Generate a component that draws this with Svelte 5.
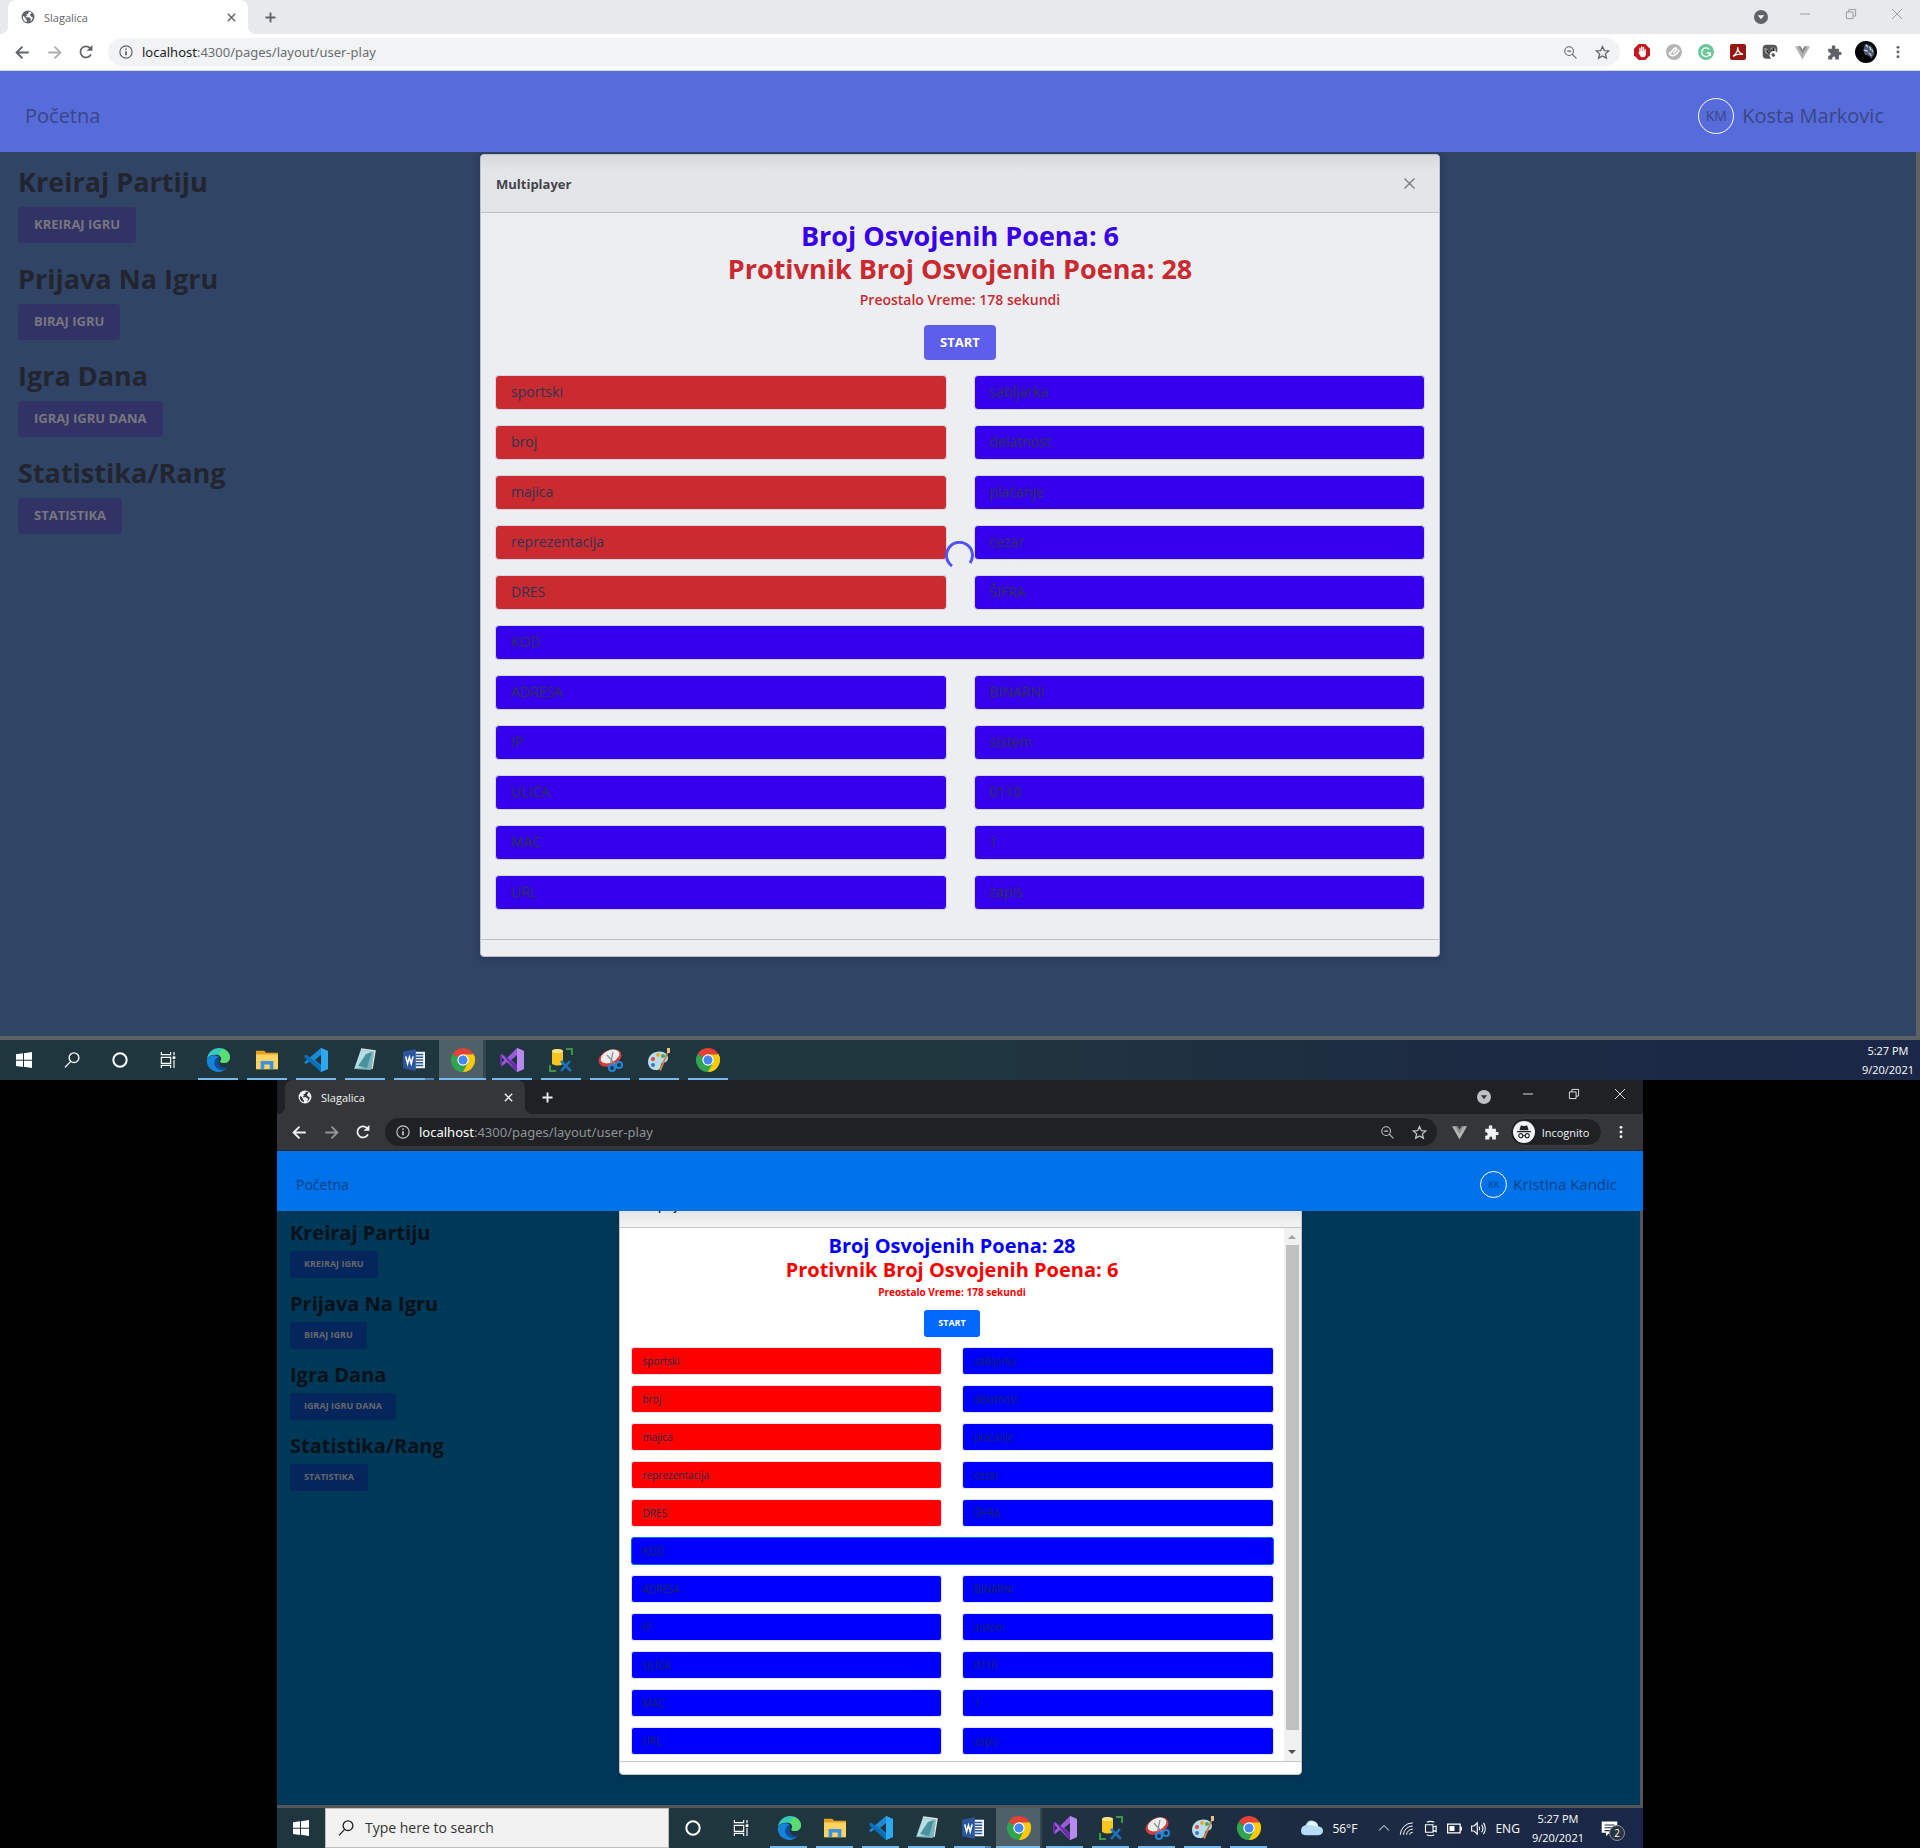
<script>
  const pairsTop = [
    ['sportski', 'sabljarka'],
    ['broj', 'delatnost'],
    ['majica', 'plaćanje'],
    ['reprezentacija', 'cezar'],
    ['DRES', 'ŠIFRA']
  ];
  const pairsBottom = [
    ['ADRESA', 'BINARNI'],
    ['IP', 'sistem'],
    ['ULICA', '0110'],
    ['MAC', '1'],
    ['URL', 'zapis']
  ];
  const sections = [
    ['Kreiraj Partiju', 'Kreiraj igru'],
    ['Prijava Na Igru', 'Biraj igru'],
    ['Igra Dana', 'Igraj igru dana'],
    ['Statistika/Rang', 'Statistika']
  ];
  const apps = [
    ['edge', 'Edge'],
    ['folder', 'File Explorer'],
    ['code', 'Visual Studio Code'],
    ['notepad', 'Notepad'],
    ['doc', 'Word'],
    ['chrome', 'Chrome'],
    ['vs', 'Visual Studio'],
    ['db', 'Database tools'],
    ['snip', 'Snipping Tool'],
    ['paint', 'Paint'],
    ['chrome', 'Chrome']
  ];
  const extensions = ['block', 'clip', 'grammar', 'acrobat', 'mask', 'vue', 'puzzle'];
  const host = { name: 'Kosta Markovic', initials: 'KM', mine: 6, theirs: 28, incognito: false };
  const guest = { name: 'Kristina Kandic', initials: 'KK', mine: 28, theirs: 6, incognito: true };
</script>

{#snippet icon(name)}
  <svg class="icon {name}" viewBox="0 0 24 24" aria-hidden="true">
    {#if name === 'globe'}
      <circle cx="12" cy="12" r="11" fill="currentColor" />
      <path class="cut" d="M4 10l4 4v2l2 1v4C5 20 2 15 4 10zM13 3v2c0 2-4 1-4 3 0 1 2 1 2 2s-3 1-3 2 5 0 6 1 3 1 3 3-1 2-2 4c3-1 5-4 5-7 0-2-2-1-3-2s-2-3-1-4 2-1 2-2-2-2-4-2z" />
    {:else if name === 'close'}
      <path class="line" d="M4 4l16 16M20 4L4 20" />
    {:else if name === 'plus'}
      <path class="line" d="M12 4v16M4 12h16" />
    {:else if name === 'back'}
      <path class="line" d="M22 12H3M12 2.500l-9.500 9.500 9.500 9.500" />
    {:else if name === 'forward'}
      <path class="line" d="M2 12h19M12 2.500l9.500 9.500-9.500 9.500" />
    {:else if name === 'reload'}
      <path class="line" d="M20.500 16A9.500 9.500 0 1 1 18.500 5l2 2" />
      <path d="M23 0v10h-10z" fill="currentColor" />
    {:else if name === 'info'}
      <circle class="thin" cx="12" cy="12" r="10.500" />
      <path class="line" d="M12 10.500v7M12 6v2" />
    {:else if name === 'zoomout'}
      <circle class="thin" cx="9.500" cy="9.500" r="8" />
      <path class="thin" d="M6 9.500h7M15 15l8 8" />
    {:else if name === 'star'}
      <path class="thin" d="M12 2.500l2.900 6.400 7 .7-5.300 4.600 1.600 6.800-6.200-3.600-6.200 3.600 1.600-6.800-5.300-4.600 7-.7z" />
    {:else if name === 'down'}
      <circle cx="12" cy="12" r="12" fill="currentColor" />
      <path class="cut" d="M6.500 9h11L12 16z" />
    {:else if name === 'min'}
      <path class="hair" d="M0 12h24" />
    {:else if name === 'restore'}
      <path class="hair" d="M1 7h16v16H1zM7 7V1h16v16h-6" />
    {:else if name === 'exit'}
      <path class="hair" d="M0 0l24 24M24 0L0 24" />
    {:else if name === 'block'}
      <path d="M7 0h10l7 7v10l-7 7H7l-7-7V7z" fill="#c2191f" />
      <path d="M6 12l2 1V6q1-1.500 2 0v5h.6V4q1-1.500 2 0v7h.6V5q1-1.500 2 0v6h.6V8q1-1 2 0v7q0 5-5 5-3 0-4.500-4z" fill="#fff" />
    {:else if name === 'clip'}
      <circle cx="12" cy="12" r="12" fill="#b4b4b4" />
      <path d="M7 13l5-6q3-2 4 1l-5 6M5 12q1 6 6 5.500 4-.5 9-8.500" fill="none" stroke="#fff" stroke-width="2.500" />
    {:else if name === 'grammar'}
      <circle cx="12" cy="12" r="12" fill="#6cc79b" />
      <path d="M17 8a6.500 6.500 0 1 0 1.500 5.500H13m5.500 0V18" fill="none" stroke="#fff" stroke-width="2" />
    {:else if name === 'acrobat'}
      <rect width="24" height="24" rx="3" fill="#951813" />
      <path d="M4.500 18.500C9 15 12 10 11.500 5M11.500 5c0 5 3 9 8 10.500M4.500 18.500C9 15.500 14 14.500 19.500 15.500" fill="none" stroke="#fff" stroke-width="2" />
    {:else if name === 'mask'}
      <rect x="1" y="1" width="22" height="21" rx="6" fill="#565656" />
      <path d="M3 6l5 1 3 5-1 4-5-2zM12 7l4-2 5 2v4z" fill="#999" />
      <path d="M7 9l3 5M17 6v5" stroke="#222" stroke-width="2" />
      <circle cx="18" cy="17" r="6.500" fill="#fff" />
      <path d="M14 15l3-1.500 3 3-2 3-3-1z" fill="#555" />
    {:else if name === 'vue'}
      <path d="M0 2h7l5 9 5-9h7L12 23z" fill="#b3b3b3" />
      <path d="M5 2h4l3 5 3-5h4l-7 12z" fill="#8a8a8a" />
    {:else if name === 'puzzle'}
      <path d="M2 6h6q-1.500-5.500 2.500-5.500T13 6h6v5q4.500-1 4.500 2.500T19 16v7h-6q1-4.500-2-4.500T8.500 23H2v-6q4 .5 4-2.500T2 11z" fill="currentColor" />
    {:else if name === 'dots'}
      <circle cx="12" cy="4" r="2.500" fill="currentColor" /><circle cx="12" cy="12" r="2.500" fill="currentColor" /><circle cx="12" cy="20" r="2.500" fill="currentColor" />
    {:else if name === 'face'}
      <circle cx="12" cy="12" r="12" fill="#050507" />
      <path d="M11 3l4 1 4 3 2 7-3 5-3-3-4-1-2-5z" fill="#4e5a70" />
      <path d="M12 4l2 3M16 6l1 4M10 10l4 1M15 13l3 3M18 9l2 3" stroke="#cfd6e2" stroke-width="1.300" />
    {:else if name === 'incog'}
      <circle cx="12" cy="12" r="12" fill="#f1f3f4" />
      <path d="M8.500 5q3.500 1 7 0l1.500 5H7zM4.500 11h15v1.300h-15z" fill="#202124" />
      <g fill="none" stroke="#202124" stroke-width="1.200"><circle cx="8.500" cy="16" r="2.200" /><circle cx="15.500" cy="16" r="2.200" /><path d="M10.700 16h2.600" /></g>
    {:else if name === 'win'}
      <path d="M0 3.500L10.500 2v9.500H0zM12 1.800L24 0v11.500H12zM0 13h10.500v9.500L0 21zM12 13h12v11l-12-1.800z" fill="#fff" />
    {:else if name === 'search'}
      <circle class="thin" cx="15" cy="8.500" r="7.300" />
      <path class="thin" d="M10 14l-8.500 9" />
    {:else if name === 'ring'}
      <circle cx="12" cy="12" r="10" fill="none" stroke="#fff" stroke-width="3" />
    {:else if name === 'taskview'}
      <path d="M2 0v4h14V0M2 8h14v9H2zM2 24v-4h14v4M21 0v5M21 12v12" fill="none" stroke="#fff" stroke-width="1.700" />
      <rect x="19" y="6.500" width="4" height="4" fill="#fff" />
    {:else if name === 'edge'}
      <path d="M1 11C2 4 7 0 13 0c7 0 11 5 11 9 0 4-3 6-6 6-4 0-4-1-3-3 1-4-3-6-7-5-4 0-6 2-7 4z" fill="#36c9bc" />
      <path d="M17 1c5 2 7 5 7 8 0 4-3 6-6 6-4 0-4-1-3-3 1-3-1-5-3-6z" fill="#59dc70" />
      <path d="M1 11c2-4 8-5 12-2-4 1-5 5-3 9 2 4 7 5 11 1-3 5-9 6-13 4-5-2-8-7-7-12z" fill="#1583d8" />
      <path d="M13 9c-4 1-6 5-4 9 3 5 9 5 13 1-4 2-8 1-9-3-1-3 0-5 0-7z" fill="#0b4f9e" />
    {:else if name === 'folder'}
      <path d="M0 2h9l2 2h13v18H0z" fill="#e4a21d" /><path d="M0 6h24v16H0z" fill="#ffd264" />
      <path d="M5 22v-9h14v9h-4v-5H9v5z" fill="#3a93de" />
    {:else if name === 'code'}
      <path d="M17 0l7 3v18l-7 3L6 13l-4 3-2-1.500L4 11z" fill="#1b8ad3" />
      <path d="M0 8l2-1.500L17 18v6L1 10z" fill="#0a6eb8" /><path d="M17 0l7 3v18l-7 3z" fill="#2fa9ee" /><path d="M17 7v10l-6-5z" fill="#20363f" />
    {:else if name === 'notepad'}
      <path d="M8 1l14 2-4 19-17-1z" fill="#7db5bf" /><path d="M8 2l11 2-5 15-12 1z" fill="#b7dfe3" /><path d="M13 6l6-2-5 16-9-2z" fill="#4a929e" /><path d="M8 1l14 2-3 18" fill="none" stroke="#dde5e3" stroke-width="1.500" />
    {:else if name === 'doc'}
      <path d="M12 3h12v18H12z" fill="#f4f7fc" /><path d="M14 6h8M14 9h8M14 12h8M14 15h8M14 18h8" stroke="#2b579a" stroke-width="1.400" />
      <path d="M0 3l14-3v24L0 21z" fill="#2b579a" /><path d="M3 8l2 8 2-7 2 7 2-8" fill="none" stroke="#fff" stroke-width="1.700" />
    {:else if name === 'chrome'}
      <path d="M12 12L1.600 6A12 12 0 0 1 22.400 6z" fill="#e24335" /><path d="M12 12h0L22.400 6A12 12 0 0 1 12 24z" fill="#fbcb0b" /><path d="M12 12v12A12 12 0 0 1 1.600 6z" fill="#30a451" />
      <path d="M12 6.500h10.700q1 2 1.100 5L17 15z" fill="#fbcb0b" /><path d="M17 14.500L12 24h-1L7 15z" fill="#30a451" />
      <circle cx="12" cy="12" r="5.700" fill="#fff" /><circle cx="12" cy="12" r="4.500" fill="#4486f4" />
    {:else if name === 'vs'}
      <path d="M17 0l7 3v18l-7 3L7 14l-5 4-2-1V7l2-1 5 4z" fill="#9a5bd8" /><path d="M2 6l15 18v-7L2 6zM0 7v10l2 1V6z" fill="#6a2ca8" /><path d="M17 0l7 3v18l-7 3z" fill="#b889ef" /><path d="M17 7v10l-6-5zM2 9.500v5L4.500 12z" fill="#20363f" />
    {:else if name === 'db'}
      <path d="M3 3q5-4 11 0v13q-5 3-11 0z" fill="#f7c51d" /><ellipse cx="8.500" cy="3" rx="5.500" ry="2" fill="#ffe38a" />
      <path d="M17 1h6v6M1 17v6h6" fill="none" stroke="#3b9648" stroke-width="2" /><path d="M12 13l10 10M21 13l-9 10" stroke="#1a73bd" stroke-width="2.500" />
    {:else if name === 'snip'}
      <ellipse cx="12" cy="10" rx="12" ry="8" transform="rotate(-25 12 10)" fill="#d33d3d" /><ellipse cx="12" cy="8.500" rx="10" ry="6" transform="rotate(-25 12 8.500)" fill="#eeefed" />
      <path d="M9 7l9 10M15 4l-3 14" stroke="#8b9399" stroke-width="1.300" /><g fill="none" stroke="#2384d5" stroke-width="2.200"><circle cx="14" cy="20" r="3" /><circle cx="21" cy="17" r="3" /></g>
    {:else if name === 'paint'}
      <path d="M1 14C1 6 9 2 16 4c6 2 6 8 3 10-2 1-4 0-5 2 0 3-1 7-6 6-4 0-7-4-7-8z" fill="#b9dced" />
      <circle cx="6" cy="11" r="2" fill="#dd4b39" /><circle cx="11" cy="7" r="2" fill="#efa72a" /><circle cx="16" cy="8" r="2" fill="#4aa94c" /><circle cx="6" cy="17" r="2" fill="#3c78c9" />
      <path d="M21 2l1 1-8 20-2-1z" fill="#c9803a" /><path d="M20 0l3 0 0 5-3 0z" fill="#e8c08c" />
    {:else if name === 'cloud'}
      <path d="M6 20q-6 0-6-5t5-6q2-6 8-5 5 1 6 6 5 1 5 5t-5 5z" fill="#b7dcf7" /><path d="M7 9q2-5 6-4 5 1 5 6-6-3-11-2z" fill="#f0f8ff" />
    {:else if name === 'up'}
      <path class="thin" d="M2 17L12 7l10 10" />
    {:else if name === 'wifi'}
      <g fill="none" stroke="#fff" stroke-width="1.600"><path d="M2 22A20 20 0 0 1 22 3M7 22A15 15 0 0 1 22 8M12 22a10 10 0 0 1 10-9" /><path d="M17 22q0-4 5-4" /></g>
    {:else if name === 'cam'}
      <path d="M4 6h12v12H4zM16 10l5-2v9l-5-2M6 2q6-3 12 0M6 22q6 3 12 0" fill="none" stroke="#fff" stroke-width="1.800" />
    {:else if name === 'battery'}
      <path d="M1 5h20v14H1zM23 9v6" fill="none" stroke="#fff" stroke-width="2" /><path d="M4 8h8v8H4z" fill="#fff" />
    {:else if name === 'sound'}
      <path d="M1 8h4l5-5v18l-5-5H1zM13 9q2 3 0 6M17 6q4 6 0 12M20 3q6 9 0 18" fill="none" stroke="#fff" stroke-width="1.800" />
    {:else if name === 'note'}
      <path d="M1 2h22v16H12l-5 5v-5H1z" fill="#fff" /><path d="M5 7h14M5 11h14M5 15h8" stroke="#1f2b45" stroke-width="1.500" />
    {/if}
  </svg>
{/snippet}

{#snippet word(value, kind)}
  <input class="word {kind}" type="text" {value} aria-label={value} />
{/snippet}

{#snippet browser(user)}
  <header class="chrome-top">
    <div class="tabs">
      <div class="tab">
        {@render icon('globe')}
        <span class="tab-title">Slagalica</span>
        <button class="bare" aria-label="Close tab">{@render icon('close')}</button>
      </div>
      <button class="bare new-tab" aria-label="New tab">{@render icon('plus')}</button>
      <div class="window-buttons">
        <button class="bare search-tabs" aria-label="Search tabs">{@render icon('down')}</button>
        <button class="bare" aria-label="Minimize">{@render icon('min')}</button>
        <button class="bare" aria-label="Restore">{@render icon('restore')}</button>
        <button class="bare" aria-label="Close">{@render icon('exit')}</button>
      </div>
    </div>
    <div class="toolbar">
      <button class="bare tool" aria-label="Back">{@render icon('back')}</button>
      <button class="bare tool dim" aria-label="Forward" disabled>{@render icon('forward')}</button>
      <button class="bare tool" aria-label="Reload">{@render icon('reload')}</button>
      <div class="address">
        {@render icon('info')}
        <a class="url" href="#play"><b>localhost</b>:4300/pages/layout/user-play</a>
        <button class="bare tool" aria-label="Zoom">{@render icon('zoomout')}</button>
        <button class="bare tool" aria-label="Bookmark">{@render icon('star')}</button>
      </div>
      {#if user.incognito}
        <button class="bare tool" aria-label="Vue devtools">{@render icon('vue')}</button>
        <button class="bare tool" aria-label="Extensions">{@render icon('puzzle')}</button>
        <button class="bare incognito">{@render icon('incog')}<span>Incognito</span></button>
      {:else}
        {#each extensions as name}
          <button class="bare tool" aria-label={name}>{@render icon(name)}</button>
        {/each}
        <button class="bare tool" aria-label="Profile">{@render icon('face')}</button>
      {/if}
      <button class="bare tool" aria-label="Menu">{@render icon('dots')}</button>
    </div>
  </header>

  <nav class="app-bar">
    <a href="#home">Početna</a>
    <div class="user"><span class="avatar">{user.initials}</span><span>{user.name}</span></div>
  </nav>

  <main class="page">
    <aside class="side">
      {#each sections as [title, action]}
        <section>
          <h2>{title}</h2>
          <button class="action">{action}</button>
        </section>
      {/each}
    </aside>
    <div class="modal" role="dialog" aria-label="Multiplayer">
      <div class="modal-head">
        <h3>Multiplayer</h3>
        <button class="bare" aria-label="Close dialog">{@render icon('close')}</button>
      </div>
      <div class="modal-body">
        <div class="game">
          <p class="score mine">Broj Osvojenih Poena: {user.mine}</p>
          <p class="score theirs">Protivnik Broj Osvojenih Poena: {user.theirs}</p>
          <p class="timer">Preostalo Vreme: 178 sekundi</p>
          <button class="start">Start</button>
          <div class="board">
            {#each pairsTop as [left, right]}
              {@render word(left, 'red')}
              {@render word(right, 'blue')}
            {/each}
            {@render word('KOD', user.incognito ? 'blue wide current' : 'blue wide')}
            {#each pairsBottom as [left, right]}
              {@render word(left, 'blue')}
              {@render word(right, 'blue')}
            {/each}
          </div>
        </div>
        {#if user.incognito}
          <div class="scroll"><i class="arrow-up"></i><i class="thumb"></i><i class="arrow-down"></i></div>
        {/if}
      </div>
      <div class="modal-foot"></div>
      {#if !user.incognito}
        <svg class="spinner" viewBox="0 0 30 30" aria-hidden="true"><path d="M7 25A13 13 0 1 1 25 22" /></svg>
      {/if}
    </div>
  </main>
{/snippet}

{#snippet pinned()}
  {#each apps as [name, label], i}
    <button class="bare app" class:active={i === 5} class:stacked={i === 4} aria-label={label}>{@render icon(name)}</button>
  {/each}
{/snippet}

{#snippet clock()}
  <div class="clock"><span>5:27 PM</span><span>9/20/2021</span></div>
{/snippet}

<div class="screen light">
  {@render browser(host)}
  <footer class="taskbar">
    <button class="bare sys" aria-label="Start menu">{@render icon('win')}</button>
    <button class="bare sys" aria-label="Search">{@render icon('search')}</button>
    <button class="bare sys" aria-label="Cortana">{@render icon('ring')}</button>
    <button class="bare sys" aria-label="Task view">{@render icon('taskview')}</button>
    {@render pinned()}
    <div class="tray">{@render clock()}</div>
  </footer>
</div>

<div class="screen dark">
  {@render browser(guest)}
  <footer class="taskbar">
    <button class="bare sys" aria-label="Start menu">{@render icon('win')}</button>
    <label class="find">{@render icon('search')}<input type="text" placeholder="Type here to search" aria-label="Type here to search" /></label>
    <button class="bare sys" aria-label="Cortana">{@render icon('ring')}</button>
    <button class="bare sys" aria-label="Task view">{@render icon('taskview')}</button>
    {@render pinned()}
    <div class="tray">
      {@render icon('cloud')}<span class="temp">56°F</span>
      {@render icon('up')}{@render icon('wifi')}{@render icon('cam')}{@render icon('battery')}{@render icon('sound')}
      <span class="lang">ENG</span>
      {@render clock()}
      <div class="notes">{@render icon('note')}<span class="badge">2</span></div>
    </div>
  </footer>
</div>

<style>
  :global(body) { background: #000; }
  * { box-sizing: border-box; margin: 0; }
  .screen {
    font-family: 'Open Sans', 'Noto Sans', sans-serif;
    margin: 0 auto;
    display: flex;
    flex-direction: column;
  }
  .light {
    --strip: #e8e9ed; --bar: #fff; --pill: #f1f3f4; --edge: #d6d8db; --fg: #5f6368; --strong: #202124; --tabtext: #5f6368; --ctl: #8d8f92;
    --app: #576cdb; --apptext: #3a4585; --page: #304466; --frame: #5f6265; --h: #22252f; --act: #313266; --acttext: #77777d;
    --panel: #edeef2; --line: #bec0c5; --headbg: linear-gradient(#d7d8dc, #e4e5e9 16px, #e4e5e9);
    --mine: #3700e8; --theirs: #c92a2f; --blue: #3500ec; --red: #c92b30; --start: #5e5eec; --ink: #2d3450; --rim: #d3d6e2;
    --h-size: 27px; --h-line: 33px; --btn: 35px; --btn-size: 13px; --word: 14px;
  }
  .dark {
    width: min(1366px, 100%);
    --strip: #202124; --bar: #35363a; --pill: #202124; --edge: #28292c; --fg: #f1f3f4; --strong: #fff; --tabtext: #f1f3f4; --ctl: #fff;
    --app: #0072e9; --apptext: #074184; --page: #003858; --frame: #55575b; --h: #091119; --act: #05265c; --acttext: #66666a;
    --panel: #fff; --line: #c6c6c6; --headbg: linear-gradient(#e2e2e2, #e4e4e4 27px, #f4f4f4);
    --mine: #0000f8; --theirs: #f80000; --blue: #0000ff; --red: #ff0000; --start: #0067ff; --ink: #1b2550; --rim: #dfe5f2;
    --h-size: 20px; --h-line: 24px; --btn: 27px; --btn-size: 9px; --word: 10px;
  }
  .bare { border: 0; padding: 0; background: none; color: inherit; font: inherit; display: flex; align-items: center; justify-content: center; }
  .icon { width: 16px; height: 16px; flex: none; overflow: visible; }
  .line { fill: none; stroke: currentColor; stroke-width: 3; }
  .thin { fill: none; stroke: currentColor; stroke-width: 2; }
  .hair { fill: none; stroke: var(--ctl); stroke-width: 2; }
  .cut { fill: var(--bar); }

  .chrome-top { background: var(--bar); border-bottom: 1px solid var(--edge); color: var(--fg); }
  .tabs { display: flex; height: 34px; padding-left: 8px; background: var(--strip); }
  .tab { display: flex; align-items: center; gap: 9px; width: 240px; padding: 0 11px 0 13px; background: var(--bar); border-radius: 8px 8px 0 0; position: relative; }
  .tab::before, .tab::after { content: ''; position: absolute; bottom: 0; width: 8px; height: 8px; }
  .tab::before { right: 100%; background: radial-gradient(circle at 0 0, transparent 8px, var(--bar) 8px); }
  .tab::after { left: 100%; background: radial-gradient(circle at 100% 0, transparent 8px, var(--bar) 8px); }
  .tab .globe { width: 14px; height: 14px; }
  .tab-title { flex: 1; font-size: 11px; color: var(--tabtext); }
  .tab .close { width: 11px; height: 11px; }
  .new-tab { width: 44px; }
  .new-tab .icon { width: 15px; height: 15px; }
  .window-buttons { display: flex; margin-left: auto; }
  .window-buttons .bare { width: 46px; height: 28px; }
  .window-buttons .search-tabs { width: 42px; height: 34px; color: #5f6368; }
  .dark .search-tabs { color: #bdc1c6; }
  .window-buttons .icon { width: 10px; height: 10px; }
  .window-buttons .down { width: 14px; height: 14px; }
  .toolbar { display: flex; align-items: center; height: 36px; padding: 0 6px; }
  .tool { width: 32px; height: 28px; }
  .tool .back, .tool .forward { width: 15px; height: 15px; }
  .tool .reload { width: 14px; height: 14px; }
  .dim { opacity: 0.5; }
  .tool .zoomout { width: 13px; height: 13px; }
  .tool .star, .tool .puzzle, .tool .vue { width: 15px; height: 15px; }
  .tool .dots { width: 14px; height: 14px; }
  .tool .face { width: 22px; height: 22px; }
  .address { flex: 1; display: flex; align-items: center; height: 28px; margin: 0 6px; padding: 0 2px 0 11px; border-radius: 14px; background: var(--pill); }
  .address > .info { width: 14px; height: 14px; margin-right: 9px; }
  .dark .address { color: #c4c7ca; }
  .url { flex: 1; color: #696d71; font: 13px 'Noto Sans', 'Open Sans', sans-serif; text-decoration: none; }
  .dark .url { color: #8f9499; }
  .url b { font-weight: 400; color: var(--strong); }
  .incognito { width: 92px; height: 28px; margin: 0 3px; gap: 7px; padding-right: 10px; border: 1px solid #3c3d41; border-radius: 14px; background: #202124; font-size: 11px; }
  .incognito .icon { width: 22px; height: 22px; }

  .app-bar { display: flex; align-items: center; justify-content: space-between; height: 81px; padding: 8px 36px 0 25px; background: var(--app); color: var(--apptext); font-size: 20px; }
  .app-bar a { color: inherit; text-decoration: none; }
  .user { display: flex; align-items: center; gap: 8px; font-weight: 500; }
  .avatar { display: flex; align-items: center; justify-content: center; width: 36px; height: 36px; border: 1px solid #fff; border-radius: 50%; font-size: 14px; font-weight: 400; }
  .dark .app-bar { height: 60px; padding: 6px 26px 0 19px; font-size: 14px; }
  .dark .user { gap: 6px; font-size: 15px; font-weight: 400; }
  .dark .avatar { width: 27px; height: 27px; font-size: 9px; }

  .page { display: grid; grid-template-columns: 1fr 2fr 1fr; align-items: start; background: var(--page); box-shadow: inset -4px -4px var(--frame); padding: 2px 0 83px; overflow: hidden; }
  .dark .page { box-shadow: inset -3px -3px var(--frame); padding: 0 0 33px; }
  .side { padding: 11px 18px; display: grid; gap: 19px; }
  .side h2 { font-size: var(--h-size); line-height: var(--h-line); color: var(--h); margin-bottom: 9px; }
  .dark .side { padding: 10px 13px; gap: 14px; }
  .dark .side h2 { margin-bottom: 6px; }
  .action, .start { height: var(--btn); padding: 0 16px 2px; border: 0; border-radius: 4px; font: 700 var(--btn-size) 'Open Sans', sans-serif; text-transform: uppercase; }
  .action { background: var(--act); color: var(--acttext); display: block; height: 36px; }
  .dark .action { height: 27px; }
  .dark .action, .dark .start { padding: 0 14px 2px; border-radius: 3px; }

  .modal { position: relative; background: var(--panel); border: 1px solid var(--line); border-radius: 4px; box-shadow: 0 2px 8px rgba(20, 30, 55, 0.35); }
  .modal-head { display: flex; align-items: center; justify-content: space-between; height: 58px; padding: 0 22px 0 15px; border-bottom: 1px solid var(--line); border-radius: 3px 3px 0 0; background: var(--headbg); }
  .modal-head h3 { font-size: 13px; color: #43434a; }
  .modal-head .close { width: 15px; height: 15px; color: #77787d; }
  .modal-head .line { stroke-width: 2; }
  .dark .modal { margin-top: -28px; }
  .dark .modal-head { height: 44px; padding: 0 16px 0 12px; }
  .dark .modal-head h3 { font-size: 10px; color: #222b45; }
  .modal-body { display: flex; }
  .game { flex: 1; padding: 6px 14px 29px; text-align: center; }
  .dark .game { padding: 6px 10px 6px 11px; }
  .score { font-size: var(--h-size); line-height: var(--h-line); font-weight: 700; }
  .mine { color: var(--mine); }
  .theirs, .timer { color: var(--theirs); }
  .timer { margin: 4px 0 14px; font-size: 14px; line-height: 22px; font-weight: 600; }
  .dark .timer { margin: 2px 0 10px; font-size: 10px; line-height: 16px; font-weight: 700; }
  .start { background: var(--start); color: #fff; }
  .board { display: grid; grid-template-columns: 1fr 1fr; gap: 15px 27px; margin-top: 15px; }
  .dark .board { gap: 10px 20px; margin-top: 10px; }
  .game .start { display: block; margin: 0 auto; }
  .word { width: 100%; min-width: 0; height: 35px; padding: 0 15px 2px; border: 1px solid var(--rim); border-radius: 4px; color: var(--ink); font: 400 var(--word) 'Open Sans', sans-serif; }
  .dark .word { height: 28px; padding: 0 11px; border-radius: 3px; }
  .red { background: var(--red); }
  .blue { background: var(--blue); }
  .wide { grid-column: 1 / -1; }
  .dark .current { border-color: #0067ff; }
  .modal-foot { height: 17px; border-top: 1px solid var(--line); }
  .dark .modal-foot { height: 13px; }
  .spinner { position: absolute; top: 50%; left: 50%; width: 30px; height: 30px; margin: -15px 0 0 -15px; fill: none; stroke: #5553f0; stroke-width: 3; }
  .scroll { display: flex; flex-direction: column; align-items: center; width: 17px; padding: 7px 0; background: #f1f1f1; }
  .thumb { flex: 1; width: 13px; margin: 6px 0 20px; background: #c1c1c1; }
  .arrow-up, .arrow-down { border: 4px solid transparent; }
  .arrow-up { border-bottom-color: #a3a3a3; border-top: 0; }
  .arrow-down { border-top-color: #505050; border-bottom: 0; }

  .taskbar { display: flex; height: 40px; background: linear-gradient(90deg, #20363f 0%, #20363f 50%, #1c2b42 75%, #1a2748); color: #fff; }
  .sys { width: 48px; }
  .sys .icon { width: 16px; height: 16px; }
  .light .sys + .app { margin-left: 2px; }
  .dark .sys + .app { margin-left: 1px; }
  .app { width: 49px; padding: 0 5px 0 4px; position: relative; }
  .dark .app { width: 46px; }
  .app .icon { width: 24px; height: 24px; }
  .app .doc, .app .folder { width: 22px; height: 22px; }
  .app::after { content: ''; position: absolute; left: 4px; right: 5px; bottom: 0; height: 2px; background: #76b9ed; }
  .active { background: linear-gradient(90deg, #4e6168 44px, #34474f 44px, #34474f 47px, transparent 47px); }
  .active::after { left: 0; right: 2px; }
  .stacked::after { background: linear-gradient(90deg, #76b9ed 31px, #4f85b4 31px); }
  .find { display: flex; align-items: center; gap: 11px; flex: 0 1 344px; padding: 0 12px; border: 1px solid #bdbdbd; background: #f2f2f2; color: #222; }
  .find input { flex: 1; min-width: 0; border: 0; padding: 0 0 2px; outline: 0; background: none; font: 14px 'Open Sans', sans-serif; }
  .find input::placeholder { color: #333; opacity: 1; }
  .tray { display: flex; align-items: center; margin-left: auto; font-size: 12px; }
  .light .tray { padding-right: 6px; }
  .dark .tray { padding-right: 25px; gap: 9px; }
  .tray .icon { width: 15px; height: 15px; }
  .tray .cloud { width: 22px; height: 22px; }
  .tray .up { width: 12px; height: 12px; margin-left: 12px; }
  .clock { display: flex; flex-direction: column; align-items: center; padding-bottom: 1px; font-size: 11px; line-height: 19px; }
  .dark .clock { margin-left: 3px; }
  .notes { position: relative; margin-left: 8px; display: flex; }
  .tray .note { width: 17px; height: 17px; }
  .badge { position: absolute; left: 8px; top: 5px; width: 16px; height: 16px; border: 1px solid #8c929b; border-radius: 50%; background: #2b3340; font-size: 10px; line-height: 14px; text-align: center; }
</style>
